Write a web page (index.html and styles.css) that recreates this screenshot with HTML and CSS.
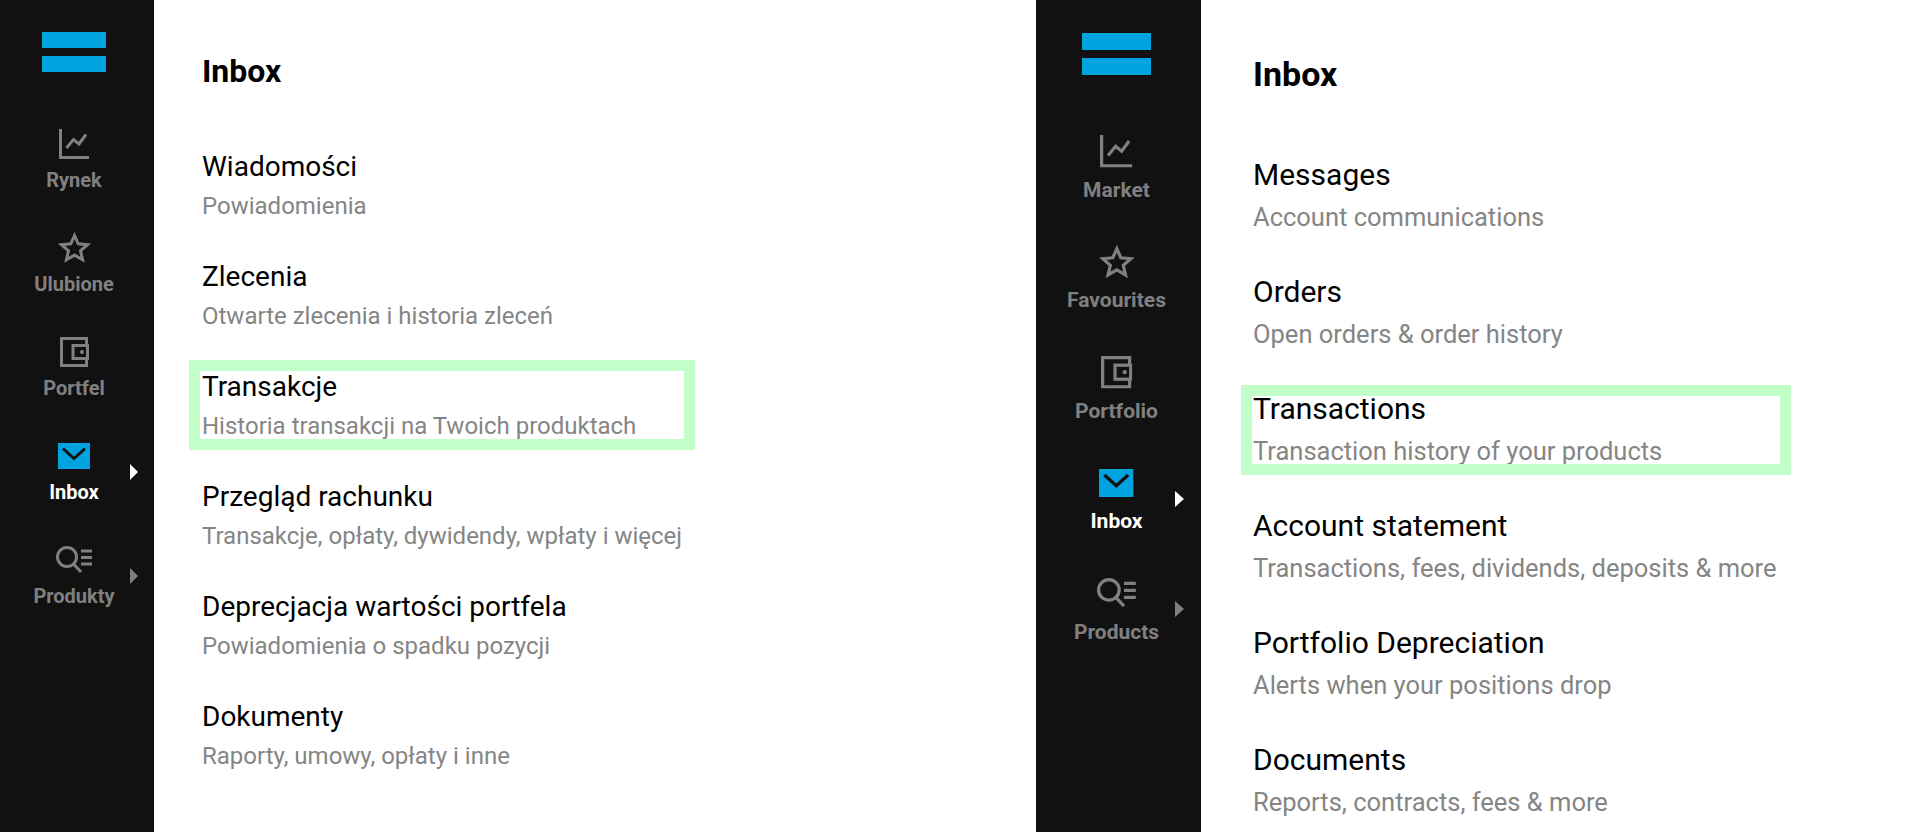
FILE: index.html
```html
<!DOCTYPE html>
<html lang="en">
  <head>
    <meta charset="UTF-8" />
    <meta name="viewport" content="width=device-width, initial-scale=1.0" />
    <title>Inbox</title>
    <link rel="stylesheet" href="styles.css">
  </head>
  <body>
    <svg class="icon-defs" width="0" height="0">
      <symbol id="icon-market" viewBox="0 0 30 30">
        <path d="M1.5 0V28.5H30" fill="none" stroke="currentColor" stroke-width="3" />
        <path d="M7.5 19L14.5 10.5L20 15L27 5.5" fill="none" stroke="currentColor" stroke-width="3" />
      </symbol>
      <symbol id="icon-star" viewBox="0 0 33 31">
        <path d="M16.5 3.5L20.2 11.8L29.5 12.7L22.5 18.8L24.6 27.8L16.5 23.1L8.4 27.8L10.5 18.8L3.5 12.7L12.8 11.8Z" fill="none" stroke="currentColor" stroke-width="3" />
      </symbol>
      <symbol id="icon-wallet" viewBox="0 0 29 30">
        <path d="M26.5 8V1.5H1.5V28.5H26.5V22" fill="none" stroke="currentColor" stroke-width="3" />
        <rect x="13" y="8.5" width="14.5" height="13" fill="none" stroke="currentColor" stroke-width="3" />
        <circle cx="22" cy="15" r="2" fill="currentColor" />
      </symbol>
      <symbol id="icon-inbox" viewBox="0 0 32 26">
        <rect width="32" height="26" fill="#00a3e0" />
        <path d="M5 5.5L16 15.5L27 5.5" fill="none" stroke="#111" stroke-width="3" />
      </symbol>
      <symbol id="icon-products" viewBox="0 0 36 27">
        <circle cx="11" cy="11" r="9.5" fill="none" stroke="currentColor" stroke-width="3" />
        <path d="M17.5 18L25 26" fill="none" stroke="currentColor" stroke-width="3" />
        <path d="M25 5H36M25 11.5H36M25 18H36" fill="none" stroke="currentColor" stroke-width="3" />
      </symbol>
    </svg>

    <div class="page">
      <!-- Polish version -->
      <section class="panel panel-pl">
        <nav class="side">
          <div class="logo"><span></span><span></span></div>
          <a class="nav-item">
            <svg class="nav-icon icon-market"><use href="#icon-market" /></svg>
            <span class="nav-label">Rynek</span>
          </a>
          <a class="nav-item">
            <svg class="nav-icon icon-star"><use href="#icon-star" /></svg>
            <span class="nav-label">Ulubione</span>
          </a>
          <a class="nav-item">
            <svg class="nav-icon icon-wallet"><use href="#icon-wallet" /></svg>
            <span class="nav-label">Portfel</span>
          </a>
          <a class="nav-item active has-arrow">
            <svg class="nav-icon icon-inbox"><use href="#icon-inbox" /></svg>
            <span class="nav-label">Inbox</span>
          </a>
          <a class="nav-item has-arrow">
            <svg class="nav-icon icon-products"><use href="#icon-products" /></svg>
            <span class="nav-label">Produkty</span>
          </a>
        </nav>
        <main class="content">
          <h1 class="title">Inbox</h1>
          <ul class="list">
            <li class="list-item">
              <div class="list-name">Wiadomości</div>
              <div class="list-desc">Powiadomienia</div>
            </li>
            <li class="list-item">
              <div class="list-name">Zlecenia</div>
              <div class="list-desc">Otwarte zlecenia i historia zleceń</div>
            </li>
            <li class="list-item marked">
              <div class="list-name">Transakcje</div>
              <div class="list-desc">Historia transakcji na Twoich produktach</div>
            </li>
            <li class="list-item">
              <div class="list-name">Przegląd rachunku</div>
              <div class="list-desc">Transakcje, opłaty, dywidendy, wpłaty i więcej</div>
            </li>
            <li class="list-item">
              <div class="list-name">Deprecjacja wartości portfela</div>
              <div class="list-desc">Powiadomienia o spadku pozycji</div>
            </li>
            <li class="list-item">
              <div class="list-name">Dokumenty</div>
              <div class="list-desc">Raporty, umowy, opłaty i inne</div>
            </li>
          </ul>
        </main>
      </section>

      <!-- English version -->
      <section class="panel panel-en">
        <nav class="side">
          <div class="logo"><span></span><span></span></div>
          <a class="nav-item">
            <svg class="nav-icon icon-market"><use href="#icon-market" /></svg>
            <span class="nav-label">Market</span>
          </a>
          <a class="nav-item">
            <svg class="nav-icon icon-star"><use href="#icon-star" /></svg>
            <span class="nav-label">Favourites</span>
          </a>
          <a class="nav-item">
            <svg class="nav-icon icon-wallet"><use href="#icon-wallet" /></svg>
            <span class="nav-label">Portfolio</span>
          </a>
          <a class="nav-item active has-arrow">
            <svg class="nav-icon icon-inbox"><use href="#icon-inbox" /></svg>
            <span class="nav-label">Inbox</span>
          </a>
          <a class="nav-item has-arrow">
            <svg class="nav-icon icon-products"><use href="#icon-products" /></svg>
            <span class="nav-label">Products</span>
          </a>
        </nav>
        <main class="content">
          <h1 class="title">Inbox</h1>
          <ul class="list">
            <li class="list-item">
              <div class="list-name">Messages</div>
              <div class="list-desc">Account communications</div>
            </li>
            <li class="list-item">
              <div class="list-name">Orders</div>
              <div class="list-desc">Open orders &amp; order history</div>
            </li>
            <li class="list-item marked">
              <div class="list-name">Transactions</div>
              <div class="list-desc">Transaction history of your products</div>
            </li>
            <li class="list-item">
              <div class="list-name">Account statement</div>
              <div class="list-desc">Transactions, fees, dividends, deposits &amp; more</div>
            </li>
            <li class="list-item">
              <div class="list-name">Portfolio Depreciation</div>
              <div class="list-desc">Alerts when your positions drop</div>
            </li>
            <li class="list-item">
              <div class="list-name">Documents</div>
              <div class="list-desc">Reports, contracts, fees &amp; more</div>
            </li>
          </ul>
        </main>
      </section>
    </div>
  </body>
</html>
```

FILE: styles.css
```css
* {
  box-sizing: border-box;
}
body {
  margin: 0;
  background: #fff;
  font-family: Roboto, "Liberation Sans", sans-serif;
  overflow: hidden;
}
.icon-defs {
  position: absolute;
}
.page {
  display: grid;
  grid-template-columns: 1036px 874px;
  height: 832px;
}
.panel {
  display: flex;
  height: 832px;
  overflow: hidden;
}

/* sizes of each version */
.panel-pl {
  --side: 154px;
  --shift: 6px;
  --logo-w: 64px;
  --logo-h: 16px;
  --logo-top: 32px;
  --nav-top: 34px;
  --nav-h: 104px;
  --nav-font: 20px;
  --nav-gap: 9px;
  --icon-scale: 1;
  --arrow-w: 8px;
  --arrow-h: 16px;
  --arrow-right: 16px;
  --arrow-top: 46px;
  --left: 48px;
  --title-top: 53px;
  --title-font: 32px;
  --list-top: 62px;
  --row: 110px;
  --name-font: 28px;
  --desc-font: 24px;
  --desc-gap: 11px;
  --mark-left: -13px;
  --mark-top: -11px;
  --mark-w: 506px;
}
.panel-en {
  --side: 165px;
  --shift: 4px;
  --logo-w: 69px;
  --logo-h: 17px;
  --logo-top: 33px;
  --nav-top: 34px;
  --nav-h: 110.5px;
  --nav-font: 21px;
  --nav-gap: 10px;
  --icon-scale: 1.08;
  --arrow-w: 9px;
  --arrow-h: 17px;
  --arrow-right: 17px;
  --arrow-top: 50px;
  --left: 52px;
  --title-top: 56px;
  --title-font: 34px;
  --list-top: 67px;
  --row: 117px;
  --name-font: 30px;
  --desc-font: 25.5px;
  --desc-gap: 14px;
  --mark-left: -12px;
  --mark-top: -8px;
  --mark-w: 550px;
}

/* sidebar */
.side {
  flex: none;
  width: var(--side);
  height: 100%;
  background: #111;
  padding-top: var(--logo-top);
}
.logo {
  display: flex;
  flex-direction: column;
  align-items: center;
  gap: 8px;
  padding-right: var(--shift);
  margin-bottom: var(--nav-top);
}
.logo span {
  width: var(--logo-w);
  height: var(--logo-h);
  background: #00a3e0;
}
.nav-item {
  position: relative;
  display: flex;
  flex-direction: column;
  align-items: center;
  justify-content: flex-end;
  height: var(--nav-h);
  padding: 0 var(--shift) 18px 0;
  color: #808080;
}
.nav-item.active {
  color: #fff;
}
.nav-label {
  font-size: var(--nav-font);
  font-weight: 700;
  line-height: 24px;
  margin-top: var(--nav-gap);
}
.nav-icon {
  display: block;
  overflow: visible;
}
.icon-market {
  width: calc(30px * var(--icon-scale));
  height: calc(30px * var(--icon-scale));
}
.icon-star {
  width: calc(33px * var(--icon-scale));
  height: calc(31px * var(--icon-scale));
}
.icon-wallet {
  width: calc(29px * var(--icon-scale));
  height: calc(30px * var(--icon-scale));
}
.icon-inbox {
  width: calc(32px * var(--icon-scale));
  height: calc(26px * var(--icon-scale));
  margin-bottom: 2px;
}
.icon-products {
  width: calc(36px * var(--icon-scale));
  height: calc(27px * var(--icon-scale));
  margin-bottom: 2px;
}
.has-arrow::after {
  content: "";
  position: absolute;
  right: var(--arrow-right);
  top: var(--arrow-top);
  border-left: var(--arrow-w) solid currentColor;
  border-top: calc(var(--arrow-h) / 2) solid transparent;
  border-bottom: calc(var(--arrow-h) / 2) solid transparent;
}

/* content */
.content {
  flex: 1;
  padding-left: var(--left);
  padding-top: var(--title-top);
}
.title {
  margin: 0;
  font-size: var(--title-font);
  font-weight: 700;
  line-height: 36px;
  color: #000;
}
.list {
  list-style: none;
  margin: var(--list-top) 0 0;
  padding: 0;
}
.list-item {
  position: relative;
  height: var(--row);
}
.list-name {
  font-size: var(--name-font);
  line-height: 32px;
  color: #000;
}
.list-desc {
  font-size: var(--desc-font);
  line-height: 24px;
  margin-top: var(--desc-gap);
  color: #858585;
}
.marked::after {
  content: "";
  position: absolute;
  box-sizing: border-box;
  left: var(--mark-left);
  top: var(--mark-top);
  width: var(--mark-w);
  height: 90px;
  border: 11px solid #c3ffc8;
}
```
